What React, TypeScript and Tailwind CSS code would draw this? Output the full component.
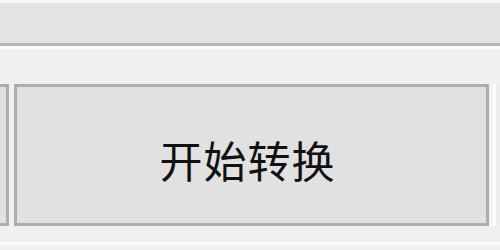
export default function App() {
  return (
    <div className="w-[500px] h-[250px] overflow-hidden bg-[#f0f0f0] flex flex-col" style={{ fontFamily: '"Noto Sans CJK SC", "Noto Sans", sans-serif' }}>
      <div className="h-[46px] shrink-0 bg-[#e4e4e4] border-t-[3px] border-t-[#f7f7f7] border-b-[3px] border-b-[#b4b4b4]" />
      <div className="h-[3px] shrink-0 bg-[#fbfbfb]" />
      <div className="h-[35px] shrink-0 bg-[#f0f0f0]" />
      <div className="flex h-[142px] shrink-0">
        <div className="w-[9px] shrink-0 bg-[#e1e1e1] border-[3px] border-l-0 border-[#adadad]" />
        <div className="w-[5px] shrink-0" />
        <div className="w-[475px] shrink-0 bg-[#e1e1e1] border-[3px] border-[#adadad] flex items-center justify-center">
          <span className="text-[43px] leading-none text-[#111] pt-[8px] pr-[8px] tracking-[1px]">开始转换</span>
        </div>
        <div className="w-[4px] shrink-0 bg-[#f4f4f4]" />
        <div className="w-[3px] shrink-0 bg-[#fcfcfc]" />
        <div className="flex-1 bg-[#eeeeee]" />
      </div>
      <div className="h-[16px] shrink-0 bg-[#f0f0f0]" />
      <div className="h-[3px] shrink-0 bg-[#fcfcfc]" />
      <div className="flex-1 bg-[#f0f0f0]" />
    </div>
  );
}
